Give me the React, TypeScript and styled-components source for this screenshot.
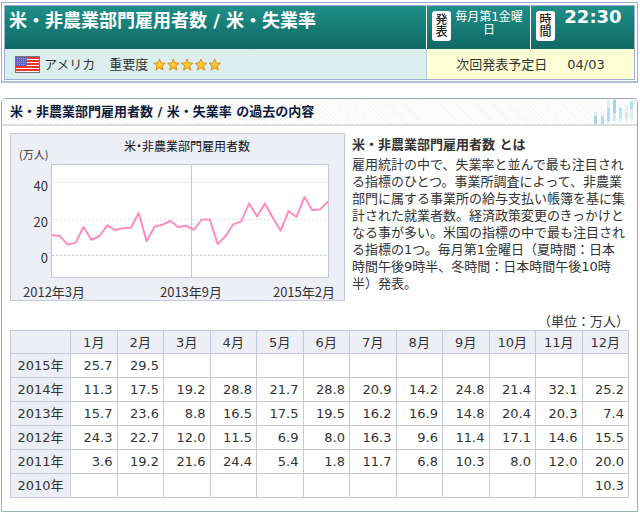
import React from "react";
import styled, { createGlobalStyle } from "styled-components";

const GlobalStyle = createGlobalStyle`
  * { box-sizing: border-box; }
  body {
    margin: 0;
    background: #fff;
    color: #333;
    font-family: "DejaVu Sans", "Noto Sans CJK JP", sans-serif;
    font-size: 13px;
    line-height: 17px;
  }
  h1, h2, h3, p { margin: 0; }
`;

const Page = styled.main`
  padding: 2px 2px 0 1px;
`;

const SummaryFrame = styled.section`
  border: 1px solid #9aaed3;
  border-bottom: 2px solid #b3c1de;
  padding: 2px 2px 1px;
`;

const SummaryGrid = styled.div`
  display: grid;
  grid-template-columns: minmax(0, 1fr) 104px 104px;
  grid-template-rows: 43px 30px;
  border: 1px solid #9aaed3;
`;

const GreenCell = styled.div<{ $divided?: boolean }>`
  display: flex;
  align-items: flex-start;
  gap: 2px;
  padding: ${(p) => (p.$divided ? "5px 5px 0" : "4px 4px 0")};
  background: linear-gradient(#1f8f88, #0f6964);
  color: #fff;
  border-left: ${(p) => (p.$divided ? "1px solid #fff" : "0")};
`;

const Title = styled.h1`
  font-size: 18px;
  line-height: 22px;
  font-weight: bold;
  white-space: nowrap;
`;

const Badge = styled.span`
  flex: none;
  width: 19px;
  padding: 3px 3px;
  border-radius: 3px;
  background: #fff;
  color: #222;
  font-size: 12px;
  line-height: 12px;
  font-weight: 500;
  text-align: center;
`;

const Schedule = styled.span`
  flex: 1;
  font-size: 12px;
  line-height: 13px;
  text-align: center;
`;

const Time = styled.time`
  flex: 1;
  font-size: 18px;
  line-height: 12px;
  font-weight: bold;
  text-align: center;
`;

const CountryCell = styled.div`
  display: flex;
  align-items: center;
  gap: 4px;
  padding-left: 10px;
  background: #dbefee;
`;

const Importance = styled.span`
  display: flex;
  align-items: center;
  gap: 5px;
  margin-left: 10px;
`;

const NextCell = styled.div`
  grid-column: span 2;
  display: flex;
  align-items: center;
  justify-content: center;
  gap: 20px;
  background: #ffffd5;
  border-left: 1px solid #b9cdd8;
`;

const Panel = styled.section`
  margin-top: 15px;
  border: 1px solid #9aa9c4;
  border-radius: 5px 5px 0 0;
`;

const PanelHeader = styled.header`
  display: flex;
  align-items: center;
  justify-content: space-between;
  height: 27px;
  padding: 0 3px 0 8px;
  border-bottom: 2px solid #dddddf;
  border-radius: 4px 4px 0 0;
  background: repeating-linear-gradient(45deg, #fff 0 2px, #f5f5f6 2px 3px);
`;

const PanelTitle = styled.h2`
  font-size: 13px;
  line-height: 17px;
  color: #0c1a3c;
`;

const PanelBody = styled.div`
  padding: 7px 8px 13px;
`;

const Overview = styled.div`
  display: flex;
  gap: 7px;
`;

const ChartBox = styled.figure`
  flex: none;
  width: 335px;
  margin: 0;
  border: 1px solid #c6c8dc;
  background: #eeeff6;
  svg { display: block; }
`;

const Description = styled.div`
  flex: 1;
  min-width: 0;
  padding: 3px 3px 0 0;
`;

const DescriptionTitle = styled.h3`
  font-size: 13px;
  line-height: 17px;
  margin-bottom: 3px;
`;

const Unit = styled.p`
  margin-top: 12px;
  text-align: right;
`;

const DataTable = styled.table`
  width: 100%;
  table-layout: fixed;
  border-collapse: collapse;
`;

const HeadCell = styled.th<{ $wide?: boolean }>`
  width: ${(p) => (p.$wide ? "60px" : "auto")};
  height: 23px;
  padding: 0;
  border: 1px solid #c6c8dc;
  background: #eeeff6;
  font-weight: normal;
  text-align: center;
`;

const YearCell = styled(HeadCell)`
  height: 24px;
`;

const ValueCell = styled.td`
  padding: 0 4px 0 0;
  border: 1px solid #c6c8dc;
  text-align: right;
`;

const ChartText = styled.text<{ $size?: number; $dark?: boolean }>`
  font-family: "Noto Sans CJK JP", sans-serif;
  font-size: ${(p) => p.$size ?? 13}px;
  fill: ${(p) => (p.$dark ? "#111" : "#333")};
  font-feature-settings: ${(p) => (p.$dark ? '"palt"' : "normal")};
`;

const months = Array.from({ length: 12 }, (_, i) => `${i + 1}月`);

const rows: { year: string; values: string[] }[] = [
  { year: "2015年", values: ["25.7", "29.5", "", "", "", "", "", "", "", "", "", ""] },
  { year: "2014年", values: ["11.3", "17.5", "19.2", "28.8", "21.7", "28.8", "20.9", "14.2", "24.8", "21.4", "32.1", "25.2"] },
  { year: "2013年", values: ["15.7", "23.6", "8.8", "16.5", "17.5", "19.5", "16.2", "16.9", "14.8", "20.4", "20.3", "7.4"] },
  { year: "2012年", values: ["24.3", "22.7", "12.0", "11.5", "6.9", "8.0", "16.3", "9.6", "11.4", "17.1", "14.6", "15.5"] },
  { year: "2011年", values: ["3.6", "19.2", "21.6", "24.4", "5.4", "1.8", "11.7", "6.8", "10.3", "8.0", "12.0", "20.0"] },
  { year: "2010年", values: ["", "", "", "", "", "", "", "", "", "", "", "10.3"] },
];

const series = [
  11, 10.4, 5.7, 6.8, 15.4, 8.4, 10.3, 16.3, 13.8, 14.7, 15, 23.1, 7.5, 15.6, 16.7, 18.7, 15.4, 16.1,
  13.9, 19.6, 19.6, 6, 10.3, 16.9, 18.5, 28.4, 21.3, 28.4, 20.5, 13.4, 24.2, 20.9, 31.9, 24.8, 25.1, 29.4,
];

const plot = { left: 41, right: 317, top: 30, bottom: 143, zero: 121 };
const yOf = (v: number) => plot.zero - v * 1.817;
const xOf = (i: number) => plot.left + (i * (plot.right - plot.left)) / (series.length - 1);

function Flag() {
  return (
    <svg width="25" height="17" viewBox="0 0 25 17" role="img" aria-label="アメリカ国旗">
      <rect width="25" height="17" fill="#777" />
      <rect x="1" y="1" width="23" height="15" fill="#fff" />
      {[1, 4, 7, 10, 13].map((y) => (
        <rect key={y} x="1" y={y} width="23" height="2" fill="#f5322f" />
      ))}
      <rect x="1" y="1" width="11" height="9" fill="#6163b8" />
      {[2, 4, 6, 8].map((y) =>
        [2, 4, 6, 8, 10].map((x) => <rect key={`${x}-${y}`} x={x} y={y} width="1" height="1" fill="#9a9bdc" />)
      )}
    </svg>
  );
}

function Stars() {
  return (
    <svg width="69" height="13" viewBox="0 0 69 13" role="img" aria-label="5">
      <defs>
        <linearGradient id="gold" x1="0" y1="0" x2="0" y2="1">
          <stop offset="0" stopColor="#ffe65c" />
          <stop offset="1" stopColor="#fbb60c" />
        </linearGradient>
      </defs>
      {[0, 1, 2, 3, 4].map((i) => (
        <path
          key={i}
          transform={`translate(${i * 13.8} 0)`}
          d="M6.5 1 L8 5 L12.2 5.2 L9 7.9 L10.1 12.1 L6.5 9.8 L2.9 12.1 L4 7.9 L0.8 5.2 L5 5 Z"
          fill="url(#gold)"
          stroke="#d98b1c"
          strokeWidth="1"
          strokeLinejoin="round"
        />
      ))}
    </svg>
  );
}

function Candles() {
  const bars = [
    { x: 1, wick: [13, 24], body: [17, 25], c: "#a5d3ee" },
    { x: 8, wick: [16, 25], body: [18, 25], c: "#b0d9ef" },
    { x: 14, wick: [1, 20], body: [9, 23], c: "#b3dcf1" },
    { x: 20, wick: [0, 22], body: [1, 14], c: "#a5d3ee" },
    { x: 26, wick: [8, 23], body: [9, 19], c: "#c2e2f3" },
    { x: 32, wick: [6, 23], body: [14, 20], c: "#cfe8f5" },
    { x: 37, wick: [1, 19], body: [3, 10], c: "#b9def0" },
  ];
  return (
    <svg width="41" height="25" viewBox="0 0 41 25" aria-hidden="true">
      {bars.map((b) => (
        <g key={b.x} fill={b.c}>
          <rect x={b.x} y={b.wick[0]} width="3" height={b.wick[1] - b.wick[0]} opacity="0.45" />
          <rect x={b.x} y={b.body[0]} width="3" height={b.body[1] - b.body[0]} />
        </g>
      ))}
    </svg>
  );
}

function HistoryChart() {
  const points = series.map((v, i) => `${xOf(i)},${yOf(v)}`).join(" ");
  return (
    <svg width="333" height="166" viewBox="0 0 333 166" role="img" aria-label="米・非農業部門雇用者数の推移">
      <rect x="40.5" y="30.5" width="277" height="113" fill="#fff" stroke="#c6c8dc" />
      {[0, 20, 40].map((v) => (
        <line
          key={v}
          x1={plot.left}
          x2={plot.right}
          y1={Math.round(yOf(v)) + 0.5}
          y2={Math.round(yOf(v)) + 0.5}
          stroke={v ? "#dcdce6" : "#c0cbdc"}
          strokeDasharray="2 2"
        />
      ))}
      <line x1="180.5" x2="180.5" y1={plot.top} y2={plot.bottom} stroke="#c6c8dc" />
      <polyline points={points} fill="none" stroke="#ff8cc0" strokeWidth="2" strokeLinejoin="round" />
      <ChartText x="176" y="17" textAnchor="middle" $size={12} $dark>米・非農業部門雇用者数</ChartText>
      <ChartText x="8" y="25" $size={11}>(万人)</ChartText>
      <ChartText x="37" y="57" textAnchor="end">40</ChartText>
      <ChartText x="37" y="93" textAnchor="end">20</ChartText>
      <ChartText x="37" y="129" textAnchor="end">0</ChartText>
      <ChartText x="12" y="163">2012年3月</ChartText>
      <ChartText x="180" y="163" textAnchor="middle">2013年9月</ChartText>
      <ChartText x="324" y="163" textAnchor="end">2015年2月</ChartText>
    </svg>
  );
}

export default function App() {
  return (
    <>
      <GlobalStyle />
      <Page>
        <SummaryFrame>
          <SummaryGrid>
            <GreenCell>
              <Title>米・非農業部門雇用者数 / 米・失業率</Title>
            </GreenCell>
            <GreenCell $divided>
              <Badge>発表</Badge>
              <Schedule>毎月第1金曜日</Schedule>
            </GreenCell>
            <GreenCell $divided>
              <Badge>時間</Badge>
              <Time>22:30</Time>
            </GreenCell>
            <CountryCell>
              <Flag />
              <span>アメリカ</span>
              <Importance>
                <span>重要度</span>
                <Stars />
              </Importance>
            </CountryCell>
            <NextCell>
              <span>次回発表予定日</span>
              <time>04/03</time>
            </NextCell>
          </SummaryGrid>
        </SummaryFrame>

        <Panel>
          <PanelHeader>
            <PanelTitle>米・非農業部門雇用者数 / 米・失業率 の過去の内容</PanelTitle>
            <Candles />
          </PanelHeader>
          <PanelBody>
            <Overview>
              <ChartBox>
                <HistoryChart />
              </ChartBox>
              <Description>
                <DescriptionTitle>米・非農業部門雇用者数 とは</DescriptionTitle>
                <p>
                  雇用統計の中で、失業率と並んで最も注目される指標のひとつ。事業所調査によって、非農業部門に属する事業所の給与支払い帳簿を基に集計された就業者数。経済政策変更のきっかけとなる事が多い。米国の指標の中で最も注目される指標の1つ。毎月第1金曜日（夏時間：日本時間午後9時半、冬時間：日本時間午後10時半）発表。
                </p>
              </Description>
            </Overview>
            <Unit>（単位：万人）</Unit>
            <DataTable>
              <thead>
                <tr>
                  <HeadCell as="td" $wide />
                  {months.map((m) => (
                    <HeadCell key={m} scope="col">{m}</HeadCell>
                  ))}
                </tr>
              </thead>
              <tbody>
                {rows.map((row) => (
                  <tr key={row.year}>
                    <YearCell scope="row">{row.year}</YearCell>
                    {row.values.map((v, i) => (
                      <ValueCell key={months[i]}>{v}</ValueCell>
                    ))}
                  </tr>
                ))}
              </tbody>
            </DataTable>
          </PanelBody>
        </Panel>
      </Page>
    </>
  );
}
